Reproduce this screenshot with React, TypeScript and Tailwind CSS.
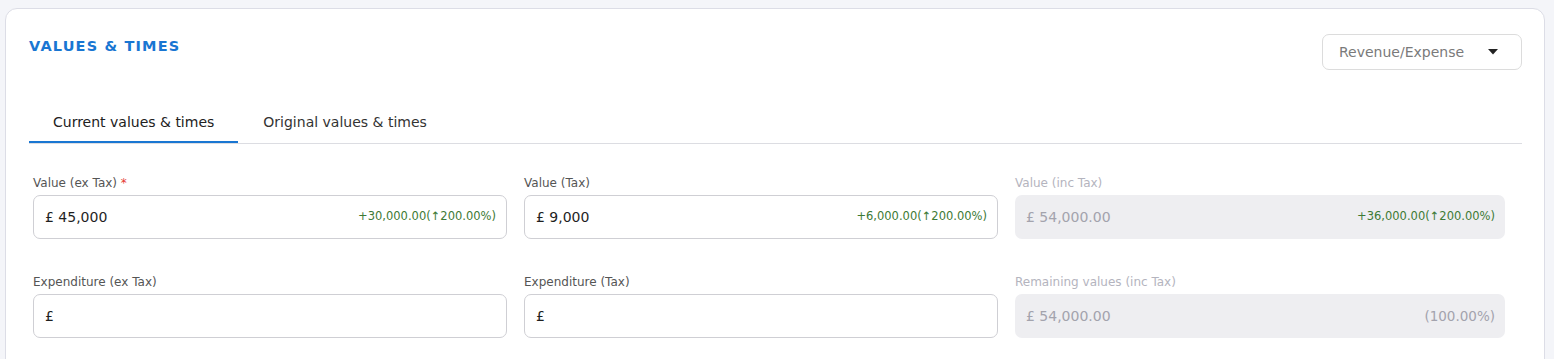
import React from 'react'

type Field = {
  label: string
  value: string
  note?: string
  required?: boolean
  disabled?: boolean
}

const rows: Field[][] = [
  [
    { label: 'Value (ex Tax)', value: '£ 45,000', note: '+30,000.00(↑200.00%)', required: true },
    { label: 'Value (Tax)', value: '£ 9,000', note: '+6,000.00(↑200.00%)' },
    { label: 'Value (inc Tax)', value: '£ 54,000.00', note: '+36,000.00(↑200.00%)', disabled: true },
  ],
  [
    { label: 'Expenditure (ex Tax)', value: '£' },
    { label: 'Expenditure (Tax)', value: '£' },
    { label: 'Remaining values (inc Tax)', value: '£ 54,000.00', note: '(100.00%)', disabled: true },
  ],
]

function FieldBox({ field }: { field: Field }) {
  const change = field.note?.startsWith('+')
  return (
    <div className="flex flex-col">
      <label
        className={`text-[12px] leading-[16px] mb-[4px] ${field.disabled ? 'text-[#b4b4be]' : 'text-[#555]'}`}
      >
        {field.label}
        {field.required && <span className="text-[#e53935]"> *</span>}
      </label>
      <div
        className={`h-[44px] rounded-[7px] flex items-center justify-between pl-[11px] pr-[10px] ${
          field.disabled ? 'bg-[#eeeef1]' : 'bg-white border border-[#cfcfd4]'
        }`}
      >
        <span className={`text-[14px] ${field.disabled ? 'text-[#a3a3ad]' : 'text-[#1f1f1f]'}`}>{field.value}</span>
        {field.note && (
          <span className={change ? 'text-[11.5px] text-[#3d7a35]' : 'text-[13.5px] text-[#a3a3ad]'}>
            {field.note}
          </span>
        )}
      </div>
    </div>
  )
}

export default function App() {
  return (
    <div className="w-[1554px] h-[359px] overflow-hidden bg-[#f4f5f9] pl-[5px] pt-[8px] pr-[9px]" style={{ fontFamily: '"DejaVu Sans", sans-serif' }}>
      <div className="bg-white border border-[#dcdde6] rounded-t-[12px] h-[400px] pl-[23px] pr-[22px] pt-[25px]">
        <div className="flex justify-between items-start">
          <h2 className="text-[14.5px] font-semibold tracking-[0.08em] text-[#1976d2] mt-[2px]">VALUES &amp; TIMES</h2>
          <button className="w-[200px] h-[36px] border border-[#dcdcdc] rounded-[7px] flex items-center justify-between pl-[16px] pr-[23px] text-[14px] text-[#7a7a7a]">
            Revenue/Expense
            <svg width="10" height="6" viewBox="0 0 10 6">
              <path d="M0 0h10L5 5.5z" fill="#222" />
            </svg>
          </button>
        </div>

        <div className="mt-[34px] flex border-b border-[#dcdde2]">
          <div className="px-[24px] pb-[8px] pt-[8px] border-b-2 border-[#1976d2] text-[14px] text-[#212121]">
            Current values &amp; times
          </div>
          <div className="pl-[25px] pr-[24px] pb-[8px] pt-[8px] text-[14px] text-[#333]">Original values &amp; times</div>
        </div>

        <div className="pl-[4px] pt-[31px] flex flex-col gap-[35px]">
          {rows.map((row, i) => (
            <div key={i} className="grid grid-cols-[474px_474px_490px] gap-x-[17px]">
              {row.map((f) => (
                <FieldBox key={f.label} field={f} />
              ))}
            </div>
          ))}
        </div>
      </div>
    </div>
  )
}
